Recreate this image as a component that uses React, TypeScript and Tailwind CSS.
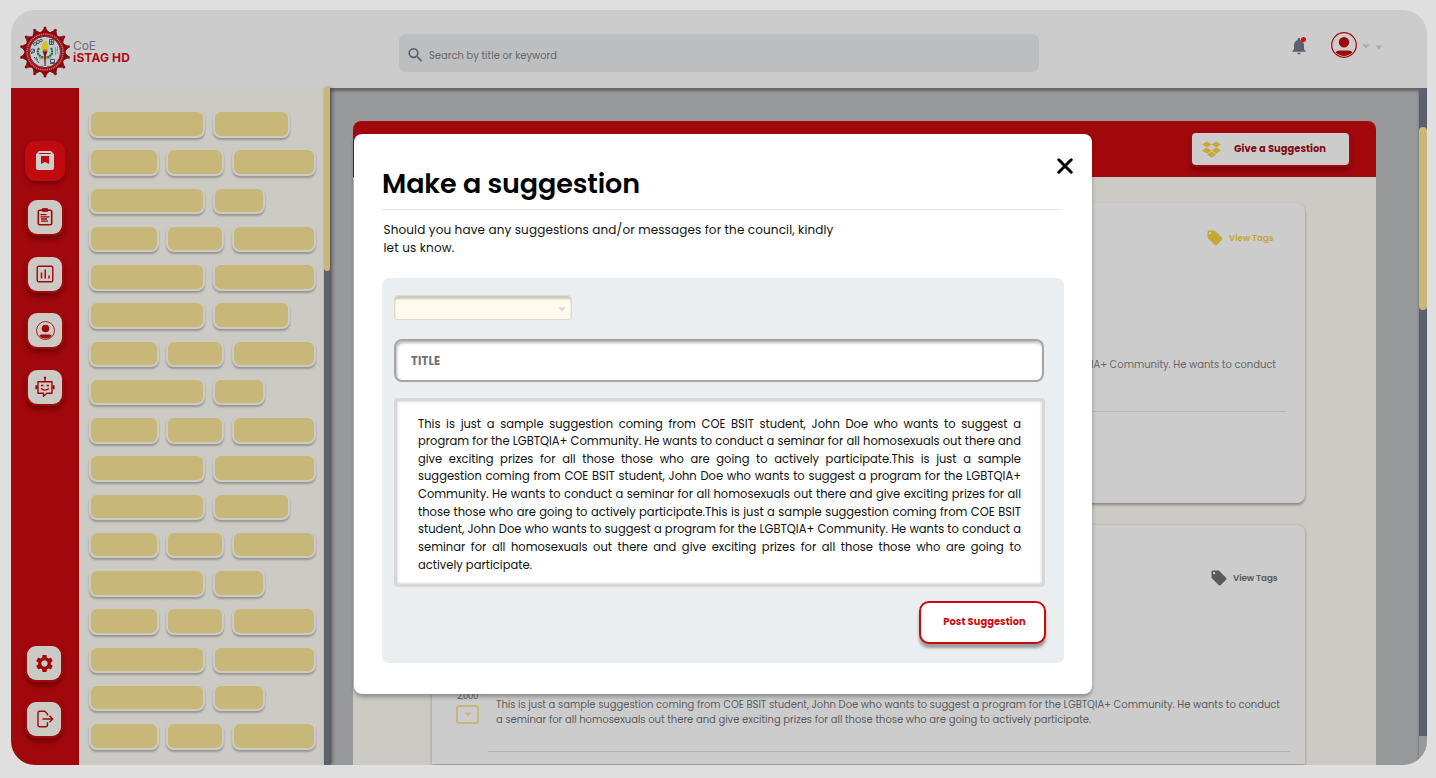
import React, { useLayoutEffect, useRef } from "react";
import { MdSettings, MdLocalOffer, MdNotifications, MdSearch } from "react-icons/md";
import { FaDropbox } from "react-icons/fa";

/** A single line of text whose tracking is tuned so that it spans `width` pixels. */
function FitText({ width, className = "", children }: { width: number; className?: string; children: string }) {
  const ref = useRef<HTMLSpanElement>(null);
  useLayoutEffect(() => {
    const el = ref.current;
    if (!el) return;
    el.style.letterSpacing = "0px";
    const natural = el.getBoundingClientRect().width;
    el.style.letterSpacing = `${(width - natural) / children.length}px`;
  }, [width, children]);
  return (
    <span ref={ref} className={`inline-block whitespace-nowrap ${className}`}>
      {children}
    </span>
  );
}

function Seal() {
  const spikes = Array.from({ length: 14 }, (_, i) => (i * 360) / 14);
  return (
    <svg viewBox="-26 -26 52 52" className="h-[52px] w-[52px] shrink-0">
      {spikes.map((a) => (
        <g key={a} transform={`rotate(${a})`}>
          <path d="M-4.6 -18.5L-1.1 -23.2H1.1L4.6 -18.5Z" fill="#a1080c" stroke="#4a1216" strokeWidth=".6" />
          <circle cy="-24" r="1.5" fill="#8c0c12" />
        </g>
      ))}
      <circle r="20.2" fill="#a90d12" stroke="#4a1216" strokeWidth=".8" />
      <circle r="17.9" fill="none" stroke="#cf8a89" strokeWidth="1.3" strokeDasharray="1 .9" />
      <circle r="15.6" fill="#c6cad2" stroke="#54282e" strokeWidth=".8" />
      <g fill="none" stroke="#3d4658" strokeWidth=".9">
        <circle cx="-10" cy="-8" r="1.5" /><circle cx="-7" cy="-10" r="1.5" /><circle cx="-4" cy="-11.500" r="1.3" />
        <circle cx="-12.300" cy="-1" r="2" /><path d="M-14 2l3.500-5M-11 5l5 6M-9 5l1.500 3" />
        <path d="M4.500-12.500h4v5h-4zM4.500-10h4M6.500-12.500v5" />
        <path d="M10.500-5v8M12.500-6v8M10.500-2h2.500" stroke="#8b919d" />
        <path d="M5.500 7.500h4v3h-4zM5 11.500h5.500" />
      </g>
      <path d="M-6-4C-9 1-6 5-1 5.500M6-4C9 1 6 5 1 5.500" fill="none" stroke="#25703d" strokeWidth="2.200" strokeDasharray="2 .5" />
      <path d="M-6 5.500q3 2.500 6 0q3 2.500 6 0" fill="none" stroke="#b09a55" strokeWidth="1.200" />
      <path d="M-2.500-1h5L.9 3.500.5 14h-1L-.9 3.500z" fill="#7a1519" />
      <path d="M0-11.500c3.500 2.500 4 6.500 2.600 9.500h-5.200C-4-5-3.500-9 0-11.500z" fill="#cfc420" />
      <path d="M-2.600-2.500h5.200l-.6 2h-4z" fill="#b9782c" />
      <path d="M-3 13.500v1.500M3 13.500v1.500" stroke="#444" strokeWidth=".8" />
    </svg>
  );
}

const ArchiveIcon = () => (
  <svg viewBox="0 0 18 19" className="h-[19px] w-[18px]">
    <path fillRule="evenodd" d="M3 0h12l3 3.200V17a2 2 0 0 1-2 2H2a2 2 0 0 1-2-2V3.200zM3.300 2v1h11.400V2zM5 5v8l4-2 4 2V5z" fill="#d0cec8" />
  </svg>
);

const ClipboardIcon = () => (
  <svg viewBox="0 0 16 18" className="h-[18px] w-4" fill="none" stroke="#a1080c" strokeWidth="1.600">
    <rect x="1.300" y="2.300" width="13.400" height="14.500" rx="1.300" />
    <rect x="5" y=".6" width="6" height="2.800" rx=".8" fill="#a1080c" strokeWidth=".8" />
    <path d="M3.500 6.600h6M3.500 8.800h9M4 11h6M4 13.200h7" strokeWidth="1.300" />
  </svg>
);

const ChartIcon = () => (
  <svg viewBox="0 0 18 18" className="h-[18px] w-[18px]" fill="none" stroke="#a1080c" strokeWidth="1.400">
    <rect x="1.200" y="1.200" width="15.600" height="15.600" rx="1.500" />
    <path d="M5.500 7.500v6M9.200 4.500v9M13 10.500v3" strokeWidth="1.500" />
  </svg>
);

const UserIcon = ({ className }: { className: string }) => (
  <svg viewBox="0 0 26 26" className={className}>
    <circle cx="13" cy="13" r="12.300" fill="none" stroke="#a1080c" strokeWidth="1.200" />
    <circle cx="13" cy="10.300" r="5.200" fill="#a1080c" />
    <path d="M4.600 20.500q.8-1.900 3.600-1.900h9.600q2.800 0 3.600 1.900A12 12 0 0 1 4.600 20.500z" fill="#a1080c" />
  </svg>
);

const BotIcon = () => (
  <svg viewBox="0 0 20 22" className="h-[22px] w-5" fill="none" stroke="#a1080c" strokeWidth="1.400">
    <path d="M3 5.700h14v11.600h-5l-3.500 3v-3H3z" strokeLinejoin="round" />
    <path d="M10 5.500V2" />
    <circle cx="10" cy="1.700" r="1.200" fill="#a1080c" stroke="none" />
    <path d="M1.500 9.300v4M18.500 9.300v4" strokeWidth="2.200" />
    <path d="M6 9.500h2.400M11.600 9.500H14" strokeWidth="1.500" />
    <path d="M6 12.600q4 3.200 8 0" strokeWidth="1.300" />
  </svg>
);

const LogoutIcon = () => (
  <svg viewBox="0 0 17 18" className="ml-[2px] h-[18px] w-[17px]" fill="none" stroke="#a1080c" strokeWidth="1.400">
    <path d="M10.500 5.500V4L7.800 1.200H2.500A1.500 1.500 0 0 0 1 2.700v12.600a1.500 1.500 0 0 0 1.500 1.500h6a2 2 0 0 0 2-2v-2.500" />
    <path d="M5.500 9h10M12.500 5.800L15.700 9l-3.200 3.200" />
  </svg>
);

const Caret = ({ className }: { className: string }) => (
  <svg viewBox="0 0 8 5" className={className}>
    <path d="M.4.400h7.200L4 4.600z" fill="currentColor" />
  </svg>
);

function NavButton({ children }: { children: React.ReactNode }) {
  return (
    <button className="flex h-[34px] w-[34px] items-center justify-center rounded-[9px] bg-[#cccac4] shadow-[0_0_0_2px_#a1080c,0_4px_4px_2px_rgba(40,0,0,0.38)]">
      {children}
    </button>
  );
}

const WIDE = ["w-[116px]", "w-[77px]"];
const TRIPLE = ["w-[70px]", "w-[58px]", "w-[84.500px]"];
const SHORT = ["w-[116px]", "w-[52px]"];
const FULL = ["w-[116px]", "w-[102.500px]"];
const chipRows = [WIDE, TRIPLE, SHORT, TRIPLE, FULL, WIDE, TRIPLE, SHORT, TRIPLE, FULL, WIDE, TRIPLE, SHORT, TRIPLE, FULL, SHORT, TRIPLE];

function TagLink({ className }: { className: string }) {
  return (
    <div className={`flex items-center ${className}`}>
      <MdLocalOffer className="mr-[5px] h-[18px] w-[18px]" />
      <FitText width={44.5} className="text-[8.800px] font-semibold leading-none">View Tags</FitText>
    </div>
  );
}

const body1 = "This is just a sample suggestion coming from COE BSIT student, John Doe who wants to suggest a program for the LGBTQIA+ Community. He wants to conduct";
const body2 = "a seminar for all homosexuals out there and give exciting prizes for all those those who are going to actively participate.";

const suggestion = [
  "This is just a sample suggestion coming from COE BSIT student, John Doe who wants to suggest a",
  "program for the LGBTQIA+ Community. He wants to conduct a seminar for all homosexuals out there and",
  "give exciting prizes for all those those who are going to actively participate.This is just a sample",
  "suggestion coming from COE BSIT student, John Doe who wants to suggest a program for the LGBTQIA+",
  "Community. He wants to conduct a seminar for all homosexuals out there and give exciting prizes for all",
  "those those who are going to actively participate.This is just a sample suggestion coming from COE BSIT",
  "student, John Doe who wants to suggest a program for the LGBTQIA+ Community. He wants to conduct a",
  "seminar for all homosexuals out there and give exciting prizes for all those those who are going to",
];

function Header() {
  return (
    <header className="relative z-10 flex h-[78px] shrink-0 items-start bg-[#cccccc]">
      <div className="flex w-[388px] items-center pl-[8px] pt-[16px]">
        <Seal />
        <div className="ml-[2px] flex flex-col items-start font-[Inter,sans-serif]">
          <FitText width={23} className="text-[12px] leading-[12px] text-[#6c6d70]">CoE</FitText>
          <FitText width={57} className="text-[12px] font-bold leading-[12px] text-[#ad0b15]">iSTAG HD</FitText>
        </div>
      </div>
      <div className="mt-[24px] flex h-[38px] w-[640px] items-center rounded-[7px] bg-[#bcbec0] pl-[7px] pt-[4px]">
        <MdSearch className="mr-[4px] h-[20px] w-[19px] text-[#5e5f6c]" />
        <FitText width={128} className="pt-px text-[9.900px] leading-none text-[#66676c]">Search by title or keyword</FitText>
      </div>
      <div className="ml-[252px] flex items-center pt-[22px]">
        <div className="relative h-[19px] w-[16px]">
          <MdNotifications className="-ml-[2px] h-[20px] w-[20px] text-[#5e5f6c]" />
          <span className="absolute left-[10px] top-[1px] h-[5px] w-[5px] rounded-full bg-[#d8080d]" />
        </div>
        <UserIcon className="ml-[23.500px] h-[26px] w-[26px]" />
        <Caret className="ml-[5px] mt-[3px] h-[5px] w-[8px] text-[#aaabad]" />
        <Caret className="ml-[5px] mt-[4px] h-[5px] w-[8px] text-[#aaabad]" />
      </div>
    </header>
  );
}

function Modal() {
  return (
    <div className="absolute left-[354px] top-[134px] z-20 flex h-[560px] w-[738px] flex-col rounded-[8px] bg-white pl-[28px] pt-[24px] shadow-[0_3px_4px_rgba(0,0,0,0.3)]">
      <div className="flex h-[51px] w-[691px] justify-between">
        <h2 className="pt-[10px] text-[27px] font-semibold leading-[31px] text-black">
          <FitText width={258}>Make a suggestion</FitText>
        </h2>
        <svg viewBox="0 0 16 16" className="h-4 w-4" stroke="#000" strokeWidth="3" strokeLinecap="round">
          <path d="M1.800 1.800l12.400 12.400M14.200 1.800L1.800 14.200" />
        </svg>
      </div>
      <div className="h-px w-[679px] bg-[#e2e3e5]" />
      <p className="flex flex-col items-start pl-[1.500px] pt-[11px] text-[12px] leading-[18px] text-[#111]">
        <FitText width={450}>Should you have any suggestions and/or messages for the council, kindly</FitText>
        <FitText width={71}>let us know.</FitText>
      </p>
      <div className="mt-[21px] flex h-[385px] w-[682px] flex-col rounded-[7px] bg-[#eaeef1] pl-[12px] pt-[17px]">
        <div className="flex h-[25px] w-[178px] items-center justify-end rounded-[4px] border border-[#dedbd6] bg-[#fffaee] pr-[5px] shadow-[inset_0_3px_2px_rgba(0,0,0,0.2)]">
          <Caret className="mt-[3px] h-[5px] w-[8px] text-[#d5d5d3]" />
        </div>
        <div className="mt-[19px] flex h-[43px] w-[650px] items-center rounded-[8px] border-2 border-[#a5a5a5] bg-white pl-[15px] pt-[2px] shadow-[inset_1px_2px_3px_rgba(0,0,0,0.28)]">
          <FitText width={29.5} className="text-[11.400px] font-bold leading-none text-[#73717f]">TITLE</FitText>
        </div>
        <div className="mt-[16px] h-[189px] w-[651px] rounded-[4px] border-[3px] border-[#d8d8d8] bg-white pl-[21px] pt-[14.500px] text-[11.500px] leading-[17.630px] text-[#111] shadow-[inset_0_0_3px_rgba(0,0,0,0.25)]">
          {suggestion.map((line) => (
            <div key={line} className="w-[603px] whitespace-nowrap text-justify [text-align-last:justify]">{line}</div>
          ))}
          <FitText width={114}>actively participate.</FitText>
        </div>
        <button className="ml-[525px] mt-[14px] flex h-[43px] w-[127px] items-center justify-center rounded-[10px] border-2 border-[#cb0a10] bg-white pb-px pl-[4px] shadow-[0_4px_3px_rgba(0,0,0,0.35)]">
          <FitText width={82.5} className="text-[9.900px] font-bold leading-none text-[#cb0a10]">Post Suggestion</FitText>
        </button>
      </div>
    </div>
  );
}

export default function App() {
  return (
    <div className="relative flex h-[778px] w-[1436px] overflow-hidden bg-[#dfdfdf] pl-[11px] pt-[10px] font-[Poppins,Inter,sans-serif]">
      <div className="flex h-[755px] w-[1416px] flex-col overflow-hidden rounded-[24px]">
        <Header />
        <div className="flex h-[677px]">
          <nav className="flex w-[68px] flex-col items-center bg-[#a1080c] pt-[52.500px]">
            <button className="flex h-[40px] w-[40px] items-center justify-center rounded-[11px] bg-[#bf0b0f] shadow-[0_3px_4px_rgba(40,0,0,0.35)]">
              <ArchiveIcon />
            </button>
            <div className="mt-[19.500px] flex flex-col gap-[22.700px]">
              <NavButton><ClipboardIcon /></NavButton>
              <NavButton><ChartIcon /></NavButton>
              <NavButton><UserIcon className="h-[19px] w-[19px]" /></NavButton>
              <NavButton><BotIcon /></NavButton>
            </div>
            <div className="mt-[242px] flex flex-col gap-[22px] pr-[2px]">
              <NavButton><MdSettings className="h-[21px] w-[21px] text-[#a1080c]" /></NavButton>
              <NavButton><LogoutIcon /></NavButton>
            </div>
          </nav>

          <aside className="flex w-[245px] flex-col gap-[10.780px] bg-[#cccac4] pl-[10.300px] pt-[22px]">
            {chipRows.map((row, i) => (
              <div key={i} className={`flex ${row.length === 3 ? "gap-[7.200px]" : "gap-[8.200px]"}`}>
                {row.map((w, j) => (
                  <div key={j} className={`h-[27.500px] shrink-0 rounded-[8px] border-[2.500px] border-[#cccac4] bg-[#c7b87a] shadow-[0_2px_2px_rgba(0,0,0,0.26)] ${w}`} />
                ))}
              </div>
            ))}
          </aside>
          <div className="relative z-10 w-[6px] bg-[#5e5f6c] shadow-[2px_0_4px_rgba(0,0,0,0.4)]">
            <div className="h-[183px] rounded-b-[3px] bg-[#c7b87a]" />
          </div>

          <main className="flex w-[1089px] bg-[#98999b] pl-[23px] pt-[33px] shadow-[inset_0_3px_3px_rgba(0,0,0,0.35)]">
            <section className="h-[644px] w-[1023px] overflow-hidden rounded-t-[8px] bg-[#cccac4]">
              <div className="flex h-[56px] items-start justify-end bg-[#a1080c] pr-[27px] pt-[12px]">
                <button className="flex h-[32px] w-[157px] items-center rounded-[4px] bg-[#cccccc] pl-[10px] shadow-[0_0_0_2px_#a1080c,0_4px_4px_2px_rgba(40,0,0,0.3)]">
                  <FaDropbox className="mr-[13px] h-[19px] w-[19px] text-[#c4a934]" />
                  <FitText width={92} className="text-[9.900px] font-bold leading-none text-[#800a10]">Give a Suggestion</FitText>
                </button>
              </div>
              <div className="flex flex-col gap-[22px] pl-[79px] pt-[26px]">
                <article className="h-[300px] w-[873px] rounded-[8px] bg-[#cccccc] pt-[26px] shadow-[0_2px_3px_rgba(60,50,40,0.45)]">
                  <TagLink className="ml-[774px] text-[#c4a934]" />
                  <div className="ml-[60px] mt-[110px] text-[10px] leading-[15px] text-[#66676b]">
                    <FitText width={784}>{body1}</FitText>
                    <FitText width={595}>{body2}</FitText>
                  </div>
                  <div className="ml-[52px] mt-[24px] h-px w-[802px] bg-[#b9b9b9]" />
                </article>
                <article className="h-[239px] w-[873px] rounded-t-[8px] bg-[#cccccc] pt-[44px] shadow-[0_1px_3px_rgba(60,50,40,0.45)]">
                  <TagLink className="ml-[778px] text-[#5a5a5a]" />
                  <div className="flex pt-[103px]">
                    <div className="flex w-[64px] shrink-0 flex-col items-center pl-[7px]">
                      <FitText width={21} className="text-[8.300px] leading-[12px] text-[#55565a]">2,000</FitText>
                      <div className="mt-[3px] flex h-[19px] w-[23px] items-center justify-center rounded-[3px] border-2 border-[#c7b87a]">
                        <Caret className="h-[5px] w-[8px] text-[#c7b87a]" />
                      </div>
                    </div>
                    <div className="pt-[7px] text-[10px] leading-[15px] text-[#5c5d62]">
                      <FitText width={784}>{body1}</FitText>
                      <FitText width={595}>{body2}</FitText>
                    </div>
                  </div>
                  <div className="ml-[56px] mt-[24px] h-px w-[802px] bg-[#b3b3b3]" />
                </article>
              </div>
            </section>
          </main>
          <div className="h-[648px] w-[8px] bg-[#5e5f6c] pt-[39px]">
            <div className="h-[183px] rounded-[4px] bg-[#c7b87a]" />
          </div>
          <div className="-ml-[8px] mt-[648px] w-[8px] bg-[#98999b]" />
        </div>
      </div>
      <Modal />
    </div>
  );
}
